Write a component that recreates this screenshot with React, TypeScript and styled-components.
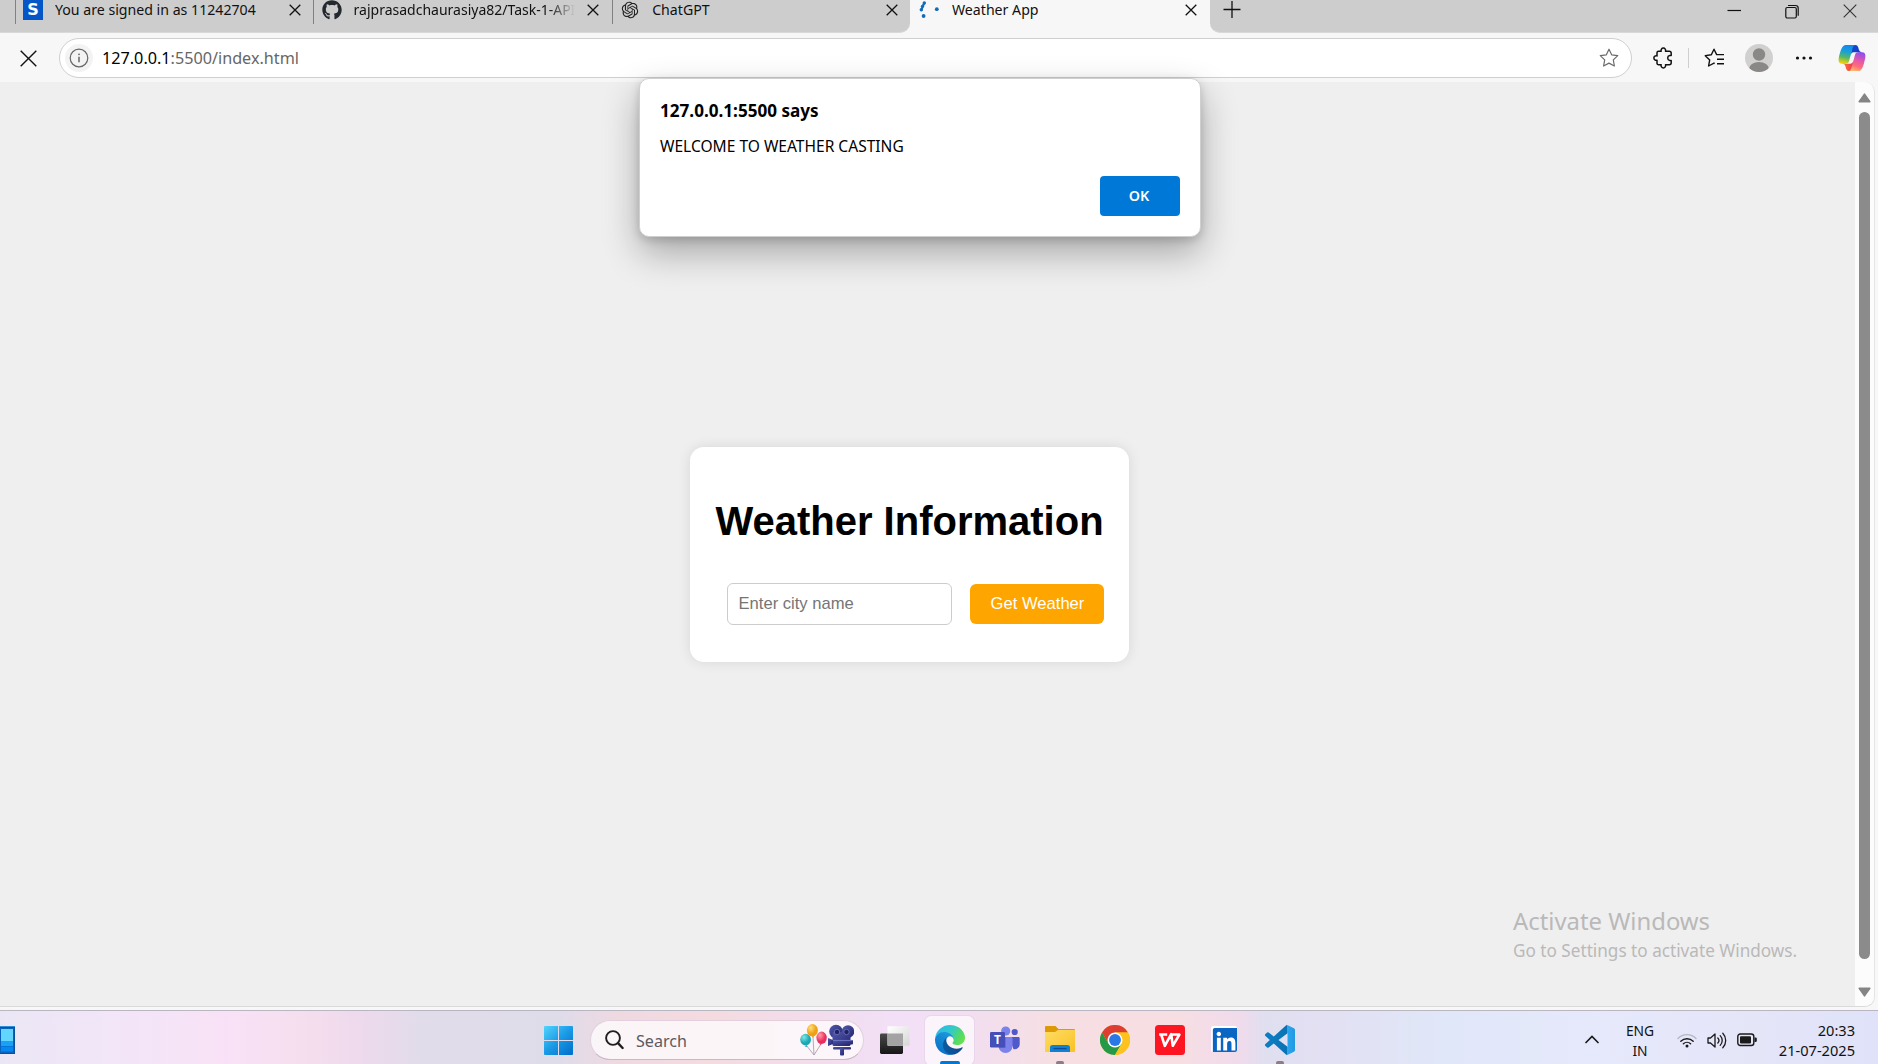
import React from 'react';
import styled, { createGlobalStyle } from 'styled-components';
import { FaGithub, FaLinkedin } from 'react-icons/fa';
import { RiOpenaiFill } from 'react-icons/ri';

const ui = `"Segoe UI", "Noto Sans", "Open Sans", sans-serif`;

const Global = createGlobalStyle`
  * { box-sizing: border-box; }
  body { margin: 0; font-family: ${ui}; color: #111; overflow: hidden; }
  svg { display: block; flex: none; }
  button { border: 0; padding: 0; font-family: inherit; }
`;

const Screen = styled.div`
  position: relative;
  display: flex;
  flex-direction: column;
  width: 1878px;
  height: 1064px;
  background: #f7f7f7;
  overflow: hidden;
`;

/* ---------- tab strip ---------- */
const TabStrip = styled.header`
  display: flex;
  height: 33px;
  flex: none;
  background: #f7f7f7;
`;
const TabGroup = styled.div<{ $side: 'left' | 'right' }>`
  display: flex;
  background: #cdcdcd;
  border-bottom: 1px solid #d9d9d9;
  ${p => p.$side === 'left'
    ? 'width: 910px; padding-left: 15px; border-bottom-right-radius: 10px;'
    : 'flex: 1; padding: 0 21px 0 13px; border-bottom-left-radius: 10px;'}
`;
const Tab = styled.div<{ $active?: boolean }>`
  display: flex;
  align-items: center;
  width: ${p => (p.$active ? 300 : 298.6)}px;
  height: 20px;
  padding: 0 13px 0 ${p => (p.$active ? 9 : 8)}px;
  flex: none;
`;
const Divider = styled.i`
  align-self: flex-start;
  width: 1px;
  height: 24px;
  margin-left: -8.5px;
  margin-right: 7.5px;
  flex: none;
  background: #808080;
`;
const Favicon = styled.span<{ $gap?: number }>`
  display: flex;
  width: 20px;
  height: 20px;
  margin-right: ${p => p.$gap ?? 12}px;
  flex: none;
`;
const SBadge = styled.span`
  width: 20px;
  height: 20px;
  background: #0557c8;
  color: #fff;
  font: 700 16px/20px "DejaVu Sans", sans-serif;
  text-align: center;
`;
const TabTitle = styled.span<{ $fade?: boolean; $size?: number }>`
  flex: 1;
  height: 22px;
  padding-top: 1px;
  font-size: ${p => p.$size ?? 14.15}px;
  line-height: 20px;
  margin-right: ${p => (p.$fade ? 12 : 20)}px;
  white-space: nowrap;
  overflow: hidden;
  color: #111;
  ${p => p.$fade && 'mask-image: linear-gradient(90deg, #000 88%, transparent 100%);'}
`;
const WindowControls = styled.div`
  display: flex;
  gap: 44px;
  margin: 4px 0 0 auto;
`;
const NewTab = styled.div`
  margin-top: 0;
`;

/* ---------- toolbar ---------- */
const Toolbar = styled.div`
  display: flex;
  align-items: center;
  height: 49px;
  flex: none;
  padding: 1px 11px 0 20px;
`;
const Address = styled.div`
  display: flex;
  align-items: center;
  width: 1573px;
  height: 40px;
  margin-left: 22px;
  padding: 0 12px 0 5px;
  border: 1px solid #cfcfcf;
  border-radius: 20px;
  background: #fff;
`;
const InfoDisc = styled.span`
  display: grid;
  place-items: center;
  width: 28px;
  height: 28px;
  border-radius: 50%;
  background: #f3f3f3;
`;
const Url = styled.span`
  flex: 1;
  margin-left: 9px;
  font-size: 16.2px;
  line-height: 24px;
  color: #666;
  b { font-weight: 400; color: #000; }
`;
const ToolIcons = styled.div`
  display: flex;
  align-items: center;
  flex: 1;
  padding-left: 21px;
`;
const ToolDivider = styled.i`
  width: 1px;
  height: 20px;
  margin: 0 15px;
  background: #cfcfcf;
`;
const Gap = styled.i<{ $w: number }>`
  width: ${p => p.$w}px;
  flex: none;
`;

/* ---------- viewport ---------- */
const Viewport = styled.main`
  display: flex;
  height: 925px;
  flex: none;
  width: 1875px;
  border-right: 1px solid #e4e4e4;
  border-bottom: 1px solid #dadada;
  border-radius: 0 10px 10px 0;
  background: #efefef;
  overflow: hidden;
`;
const Page = styled.div`
  display: flex;
  flex-direction: column;
  align-items: center;
  flex: 1;
`;
const Card = styled.section`
  width: 439px;
  height: 215px;
  margin: 365px 36px 0 0;
  padding: 0 25px;
  border-radius: 14px;
  background: #fff;
  box-shadow: 0 0 13px rgba(0, 0, 0, 0.1);
`;
const Heading = styled.h1`
  margin: 0;
  padding-top: 51px;
  font: 700 40px/46px "Liberation Sans", Arial, sans-serif;
  text-align: center;
  white-space: nowrap;
  color: #000;
`;
const Form = styled.div`
  display: flex;
  align-items: center;
  gap: 18px;
  margin: 39px 0 0 12px;
`;
const CityInput = styled.input`
  width: 225px;
  height: 42px;
  padding: 0 0 1px 10.5px;
  border: 1px solid #ccc;
  border-radius: 6px;
  background: #fff;
  outline: 0;
  font: 16.6px "Liberation Sans", Arial, sans-serif;
  &::placeholder { color: #757575; opacity: 1; }
`;
const WeatherButton = styled.button`
  width: 134px;
  height: 40px;
  padding: 0 0 1px 1px;
  flex: none;
  border-radius: 6px;
  background: #ffa500;
  color: #fff;
  font: 16.6px "Liberation Sans", Arial, sans-serif;
`;
const Scrollbar = styled.div`
  display: flex;
  flex-direction: column;
  align-items: center;
  width: 19px;
  padding: 11px 0 9px;
  background: #fcfcfc;
`;
const Thumb = styled.div`
  width: 11px;
  flex: 1;
  margin: 9px 0 28px;
  border-radius: 6px;
  background: #8b8b8b;
`;

/* ---------- overlays ---------- */
const Dialog = styled.div`
  position: absolute;
  left: 639px;
  top: 78px;
  width: 562px;
  height: 159px;
  padding: 20px;
  display: flex;
  flex-direction: column;
  border: 1px solid #cfcfcf;
  border-radius: 10px;
  background: #fff;
  box-shadow: 0 16px 36px rgba(0, 0, 0, 0.3), 0 3px 10px rgba(0, 0, 0, 0.16);
`;
const DialogTitle = styled.div`
  font-weight: 700;
  font-size: 17.1px;
  line-height: 24px;
  white-space: nowrap;
  color: #000;
`;
const DialogText = styled.div`
  margin-top: 11px;
  font-size: 15.55px;
  line-height: 24px;
  color: #000;
`;
const OkButton = styled.button`
  align-self: flex-end;
  width: 80px;
  height: 40px;
  margin-top: 18px;
  padding: 0 2px 2px 0;
  border-radius: 4px;
  background: #0078d7;
  color: #fff;
  font-size: 14.3px;
  font-weight: 600;
`;
const Watermark = styled.div`
  position: absolute;
  left: 1513px;
  top: 904px;
  color: #b9b9b9;
  white-space: nowrap;
`;
const WatermarkTitle = styled.div`
  font-size: 23.85px;
  line-height: 34px;
`;
const WatermarkText = styled.div`
  margin-top: 1px;
  font-size: 17.17px;
  line-height: 24px;
`;

/* ---------- taskbar ---------- */
const Taskbar = styled.footer`
  display: flex;
  align-items: center;
  height: 54px;
  flex: none;
  margin-top: auto;
  border-top: 1px solid #b9b6c2;
  background: linear-gradient(90deg, #ebe6f5 0, #f2e6f8 110px, #f9e1f6 235px, #f5dfee 300px,
    #eed9ed 360px, #e1dcea 420px, #dfdce9 560px, #efd9e1 620px, #f4dbe0 710px, #f2ddee 830px,
    #f3e0f8 900px, #f2deee 980px, #f6dfe3 1050px, #f6dee3 1180px, #f0dbec 1240px, #e0dff0 1265px,
    #e2e0f2 1320px, #e0e7f8 1440px, #e6e9fb 1600px, #e5e5f8 1760px, #dfe2f9 1878px);
`;
const WidgetButton = styled.div`
  margin-top: 5px;
`;
const Start = styled.div`
  margin: 6px 17px 0 529px;
`;
const SearchBox = styled.div`
  display: flex;
  align-items: center;
  width: 274px;
  height: 40px;
  padding: 0 9px 0 13.5px;
  border: 1px solid #e3d0dc;
  border-bottom-color: #c9b8c6;
  border-radius: 20px;
  background: rgba(255, 255, 255, 0.72);
  margin-top: 5px;
`;
const SearchText = styled.span`
  flex: 1;
  margin-left: 12.5px;
  padding-top: 1px;
  font-size: 16.1px;
  color: #5c5a60;
`;
const Slot = styled.div<{ $active?: boolean }>`
  position: relative;
  display: flex;
  justify-content: center;
  align-items: center;
  width: 49px;
  height: 49px;
  margin-left: 6px;
  margin-top: 5px;
  padding-bottom: 1px;
  border-radius: 6px;
  ${p => p.$active && 'background: rgba(255,255,255,.65); box-shadow: 0 0 0 1px rgba(225,205,230,.5);'}
`;
const Indicator = styled.i<{ $active?: boolean }>`
  position: absolute;
  bottom: 0;
  width: ${p => (p.$active ? 20 : 8)}px;
  height: 4px;
  border-radius: 2px;
  background: ${p => (p.$active ? '#0078d4' : '#8c7d86')};
`;
const Tray = styled.div`
  display: flex;
  align-items: center;
  margin-left: auto;
  margin-right: 23px;
  line-height: 20px;
`;
const Chevron = styled.span`
  margin-top: 4px;
`;
const Lang = styled.div`
  width: 40px;
  margin: 6px 17px 0 21px;
  text-align: center;
  font-size: 13.8px;
`;
const Status = styled.div`
  display: flex;
  align-items: center;
  gap: 10px;
  margin-top: 5px;
`;
const Clock = styled.div`
  width: 98px;
  margin-top: 4px;
  text-align: right;
  font-size: 14.6px;
`;

/* ---------- drawings ---------- */
const Cross = ({ s, w = 1.3, c = '#111' }: { s: number; w?: number; c?: string }) => (
  <svg width={s} height={s} viewBox={`0 0 ${s} ${s}`}>
    <path d={`M.7 .7L${s - 0.7} ${s - 0.7}M${s - 0.7} .7L.7 ${s - 0.7}`} stroke={c} strokeWidth={w} fill="none" />
  </svg>
);
const Spinner = () => (
  <svg width="22" height="20" viewBox="0 0 22 20" fill="#0f6cbd">
    <path d="M5.200 3.200L3.700 6.200L2.500 10" fill="none" stroke="#0f6cbd" strokeWidth="2.200" strokeLinecap="round" />
    <circle cx="5.3" cy="3" r="1.7" /><circle cx="3.5" cy="6.3" r="1.6" /><circle cx="2.3" cy="9.8" r="1.7" />
    <circle cx="4.6" cy="16" r="1.9" /><circle cx="17.8" cy="9.2" r="1.9" />
  </svg>
);
const star = 'M10 1.2l2.65 5.6 6.1.85-4.45 4.25 1.1 6.1L10 15.1 4.6 18l1.1-6.1L1.25 7.65l6.1-.85z';
const Star = () => (
  <svg width="20" height="20" viewBox="0 0 20 20">
    <path d={star} fill="none" stroke="#6b6b6b" strokeWidth="1.2" strokeLinejoin="round" />
  </svg>
);
const Puzzle = () => (
  <svg width="20" height="22" viewBox="0 0 20 22" fill="none" stroke="#111" strokeWidth="1.5" strokeLinejoin="round">
    <path d="M5.6 4.2h2.6a2.3 2.3 0 1 1 4.3 0H16.2a2 2 0 0 1 2 2v2.4h-1.5a2.5 2.5 0 0 0 0 4.9h1.5v2.3a2 2 0 0 1-2 2h-3.7a2.3 2.3 0 1 1-4.3 0H5.6a1.6 1.6 0 0 1-1.6-1.6V13.2a2.3 2.3 0 1 1 0-4.3V5.800a1.600 1.600 0 0 1 1.600-1.600z" />
  </svg>
);
const Favorites = () => (
  <svg width="21" height="20" viewBox="0 0 21 20" fill="none" stroke="#111" strokeWidth="1.4" strokeLinejoin="round">
    <path d="M10.6 15.6L10 15.1 4.6 18l1.1-6.1L1.25 7.65l6.1-.85L10 1.2l2.65 5.4H20M13 11.2h7M13 15.7h7" />
  </svg>
);
const Avatar = () => (
  <svg width="28" height="28" viewBox="0 0 28 28">
    <clipPath id="av"><circle cx="14" cy="14" r="14" /></clipPath>
    <g clipPath="url(#av)">
      <rect width="28" height="28" fill="#d2d0ce" />
      <circle cx="14" cy="10.5" r="6.2" fill="#8a8886" />
      <ellipse cx="14" cy="25" rx="10" ry="7" fill="#8a8886" />
    </g>
  </svg>
);
const Copilot = () => (
  <svg width="28" height="26" viewBox="1 4 46 40" preserveAspectRatio="none">
    <defs>
      <linearGradient id="c1" x1="0" y1="0" x2="1" y2="1"><stop stopColor="#0a4fd6" /><stop offset="1" stopColor="#2035b8" /></linearGradient>
      <linearGradient id="c2" x1="0" y1="0" x2="1" y2="0"><stop stopColor="#ff7a3a" /><stop offset="1" stopColor="#e8384f" /></linearGradient>
      <linearGradient id="c3" x1=".5" y1="0" x2=".3" y2="1"><stop stopColor="#1188ee" /><stop offset=".35" stopColor="#1aa0d8" /><stop offset=".65" stopColor="#54b868" /><stop offset="1" stopColor="#ffd400" /></linearGradient>
      <linearGradient id="c4" x1=".7" y1="0" x2=".4" y2="1"><stop stopColor="#8a4ff0" /><stop offset=".45" stopColor="#e658a8" /><stop offset=".75" stopColor="#ff6d7a" /><stop offset="1" stopColor="#ffb56b" /></linearGradient>
    </defs>
    <path fill="url(#c1)" d="M34.142 7.325A4.63 4.63 0 0 0 29.7 4H28.35a4.63 4.63 0 0 0-4.554 3.794L21.48 20.407l.575-1.965a4.63 4.63 0 0 1 4.444-3.33h7.853l3.294 1.282 3.175-1.283h-.926a4.63 4.63 0 0 1-4.443-3.325z" />
    <path fill="url(#c2)" d="M14.33 40.656A4.63 4.63 0 0 0 18.779 44h2.87a4.63 4.63 0 0 0 4.629-4.51l.312-12.163-.654 2.233a4.63 4.63 0 0 1-4.443 3.329h-7.919l-2.823-1.532-3.057 1.532h.912a4.63 4.63 0 0 1 4.447 3.344z" />
    <path fill="url(#c3)" d="M29.5 4H13.46c-4.583 0-7.332 6.057-9.165 12.113C2.123 23.29-.72 32.885 7.503 32.885h6.925a4.67 4.67 0 0 0 4.482-3.357 2078.617 2078.617 0 0 1 4.971-17.156c.843-2.843 1.544-5.284 2.621-6.805C27.107 4.714 28.115 4 29.5 4z" />
    <path fill="url(#c4)" d="M18.498 44h16.04c4.582 0 7.332-6.058 9.165-12.115 2.171-7.177 5.013-16.775-3.208-16.775h-6.926a4.67 4.67 0 0 0-4.482 3.358 2084.99 2084.99 0 0 1-4.972 17.16c-.842 2.844-1.544 5.285-2.62 6.806-.604.852-1.612 1.566-2.997 1.566z" />
  </svg>
);
const Arrow = ({ down }: { down?: boolean }) => (
  <svg width="13" height="10" viewBox="0 0 13 10" fill="#858585" stroke="#858585" strokeWidth="1.6" strokeLinejoin="round">
    <path d={down ? 'M1.2 1.3h10.6L6.5 8.8z' : 'M1.2 8.7h10.6L6.5 1.2z'} />
  </svg>
);
const Widget = () => (
  <svg width="15" height="28" viewBox="0 0 15 28">
    <rect width="15" height="28" fill="#0d4f9e" /><rect width="15" height="1" fill="#2f8fd6" />
    <rect width="14" height="25" y="2" fill="#0a62bd" />
    <rect x="1" y="3" width="12" height="12" fill="#62d6fd" />
    <rect x="1" y="15" width="12" height="5" fill="#1ba0f8" />
    <rect x="1" y="20.5" width="12" height="5" fill="#0488f0" />
  </svg>
);
const WindowsLogo = () => (
  <svg width="29" height="29" viewBox="0 0 29 29">
    <defs><linearGradient id="win" gradientUnits="userSpaceOnUse" x1="0" y1="0" x2="27" y2="29"><stop stopColor="#52d4fd" /><stop offset=".5" stopColor="#1c9be6" /><stop offset="1" stopColor="#0070cc" /></linearGradient></defs>
    <path fill="url(#win)" d="M1 0h13v14H0V1a1 1 0 0 1 1-1zM15 0h13a1 1 0 0 1 1 1v13H15zM0 15h14v14H1a1 1 0 0 1-1-1zM15 15h14v13a1 1 0 0 1-1 1H15z" />
  </svg>
);
const Magnifier = () => (
  <svg width="19" height="20" viewBox="0 0 19 20" fill="none" stroke="#1f1d20">
    <circle cx="8" cy="8" r="6.9" strokeWidth="1.9" /><path d="M13 13.2l4.6 4.8" strokeWidth="2.4" strokeLinecap="round" />
  </svg>
);
const Party = () => (
  <svg width="54" height="32" viewBox="0 0 54 32">
    <defs>
      <radialGradient id="b1" cx=".35" cy=".3"><stop stopColor="#ffe07a" /><stop offset="1" stopColor="#ee9f12" /></radialGradient>
      <radialGradient id="b2" cx=".35" cy=".3"><stop stopColor="#7fe6e2" /><stop offset="1" stopColor="#1aa9b4" /></radialGradient>
      <radialGradient id="b3" cx=".35" cy=".3"><stop stopColor="#ff9cab" /><stop offset="1" stopColor="#ea2f5e" /></radialGradient>
      <linearGradient id="cam" x1="0" y1="0" x2="1" y2="1"><stop stopColor="#5259ae" /><stop offset="1" stopColor="#22246c" /></linearGradient>
    </defs>
    <path d="M6 21l8 10M13 13l1 18M21 20l-7 11" stroke="#a9a0ad" strokeWidth=".9" fill="none" />
    <ellipse cx="5.6" cy="15.6" rx="5.4" ry="5.8" fill="url(#b2)" /><path d="M4.6 22.6l2.2-1.4.6 1.8z" fill="#1aa9b4" />
    <ellipse cx="21.6" cy="13.8" rx="5.2" ry="6.2" fill="url(#b3)" /><path d="M19.2 19.2l1.6 2 .8-1.7z" fill="#ea2f5e" />
    <ellipse cx="12.4" cy="6.3" rx="5.5" ry="6.2" fill="url(#b1)" /><path d="M11.8 12l1.2 2 1.1-1.8z" fill="#ee9f12" />
    <g fill="url(#cam)">
      <circle cx="36" cy="7.5" r="6.8" /><circle cx="48" cy="7.5" r="6.3" />
      <rect x="32.5" y="8" width="18" height="14" rx="1.5" />
      <path d="M28 14l5 2v4l-5 2z" /><rect x="33" y="16" width="20" height="4.5" rx="1" />
      <rect x="33" y="23" width="18" height="2.5" rx="1" /><rect x="40" y="24" width="4" height="7.5" rx="1" />
    </g>
    <circle cx="37" cy="8" r="2.7" fill="#20225f" stroke="#7076c4" strokeWidth=".8" />
    <circle cx="46.5" cy="8" r="2.7" fill="#20225f" stroke="#7076c4" strokeWidth=".8" />
    <path d="M33 16.4h19" stroke="#7c82cf" strokeWidth=".8" />
  </svg>
);
const TaskView = () => (
  <svg width="30" height="28" viewBox="0 0 30 28">
    <defs>
      <linearGradient id="tv1" x1="0" y1="0" x2="0" y2="1"><stop stopColor="#4a4a4a" /><stop offset="1" stopColor="#161616" /></linearGradient>
      <linearGradient id="tv2" x1="0" y1="0" x2="1" y2="1"><stop stopColor="#fff" /><stop offset="1" stopColor="#d6d6d6" /></linearGradient>
    </defs>
    <rect x="0" y="7.5" width="23" height="20.5" rx="1.4" fill="url(#tv1)" />
    <rect x="7.5" y=".3" width="22" height="19.5" rx="1" fill="url(#tv2)" />
    <rect x="7.5" y="7.5" width="15.5" height="12.3" fill="#a3a3a3" />
  </svg>
);
const EdgeLogo = () => (
  <svg width="30" height="30" viewBox="4.6 4.8 256 256">
    <defs>
      <linearGradient id="e1" x1="0" y1=".6" x2="1" y2=".6"><stop stopColor="#0c59a4" /><stop offset="1" stopColor="#114a8b" /></linearGradient>
      <linearGradient id="e2" x1=".7" y1="0" x2=".3" y2="1"><stop stopColor="#1b9de2" /><stop offset=".4" stopColor="#1488d2" /><stop offset="1" stopColor="#0a6fc8" /></linearGradient>
      <linearGradient id="e3" x1="0" y1=".2" x2="1" y2=".65"><stop stopColor="#2fb5e8" /><stop offset=".45" stopColor="#33c8cd" /><stop offset=".8" stopColor="#52d96a" /><stop offset="1" stopColor="#66e04c" /></linearGradient>
    </defs>
    <path fill="url(#e1)" d="M235.68 195.46a93.73 93.73 0 0 1-10.54 4.71 101.87 101.87 0 0 1-35.9 6.46c-47.32 0-88.54-32.55-88.54-74.32A31.48 31.48 0 0 1 117.13 105c-42.8 1.8-53.8 46.4-53.8 72.53 0 73.88 68.09 81.37 82.76 81.37 7.91 0 19.84-2.3 27-4.56l1.31-.44a128.34 128.34 0 0 0 66.6-52.8 4 4 0 0 0-5.32-5.64z" />
    <path fill="url(#e2)" d="M110.34 246.34A79.2 79.2 0 0 1 87.6 225a80.72 80.72 0 0 1 29.53-120c3.12-1.47 8.45-4.13 15.54-4a32.35 32.35 0 0 1 25.69 13 31.88 31.88 0 0 1 6.36 18.66c0-.21 24.46-79.6-80-79.6-43.9 0-80 41.66-80 78.21a130.15 130.15 0 0 0 12.11 56 128 128 0 0 0 156.38 67.11 75.55 75.55 0 0 1-62.78-8z" />
    <path fill="url(#e3)" d="M156.94 153.78c-.81 1.05-3.3 2.5-3.3 5.66 0 2.61 1.7 5.12 4.72 7.23 14.38 10 41.49 8.68 41.56 8.68a59.56 59.56 0 0 0 30.27-8.35 61.38 61.38 0 0 0 30.43-52.88c.26-22.41-8-37.31-11.34-43.91C228.09 28.76 182.35 4.81 132.61 4.81a128 128 0 0 0-128 126.2c.48-36.54 36.8-66.05 80-66.05 3.5 0 23.46.34 42 10.07 16.34 8.58 24.9 18.94 30.85 29.21 6.18 10.67 7.28 24.15 7.28 29.52s-2.74 13.33-7.77 20.02z" />
  </svg>
);
const TeamsLogo = () => (
  <svg width="30" height="28" viewBox="0 0 30 28">
    <circle cx="24.7" cy="6" r="3.1" fill="#5059c9" />
    <path d="M19 11h9.4c.8 0 1.3.6 1.3 1.3v5.9a5 5 0 0 1-5 5h-1.2z" fill="#5059c9" />
    <circle cx="15.7" cy="5" r="4.6" fill="#7b83eb" />
    <path d="M9 11h12.3c.7 0 1.2.6 1.2 1.3v7.6a7 7 0 0 1-14 .2z" fill="#7b83eb" />
    <path d="M10 11h6v11h-7z" fill="#5a62c3" opacity=".55" />
    <rect x="0" y="6" width="15" height="15.5" rx="1.3" fill="#464eb8" />
    <text x="7.5" y="18" fill="#fff" fontFamily="Open Sans" fontWeight="700" fontSize="12" textAnchor="middle">T</text>
  </svg>
);
const Explorer = () => (
  <svg width="30" height="27" viewBox="0 0 30 27">
    <defs><linearGradient id="fo" x1="0" y1="0" x2="1" y2="1"><stop stopColor="#ffdc62" /><stop offset="1" stopColor="#f9c127" /></linearGradient></defs>
    <path d="M0 1.2C0 .5.5 0 1.2 0h9.3l3 3H29c.6 0 1 .5 1 1v6H0z" fill="#dd9a05" />
    <path d="M0 6h10l3-2h17v21a1 1 0 0 1-1 1H1a1 1 0 0 1-1-1z" fill="url(#fo)" />
    <path d="M5 26v-4.500a2.500 2.500 0 0 1 2.500-2.500h15a2.500 2.500 0 0 1 2.500 2.500V26z" fill="#1080d2" />
    <path d="M8.500 22.600h13" stroke="#0a4d96" strokeWidth="1.300" />
  </svg>
);
const ChromeLogo = () => (
  <svg width="30" height="30" viewBox="0 0 48 48">
    <circle cx="24" cy="24" r="24" fill="#fcc31e" />
    <path d="M24 12h20.8A24 24 0 0 0 3.200 12L13.600 30z" fill="#de3d31" />
    <path d="M13.600 30L3.200 12A24 24 0 0 0 24 48l10.400-18z" fill="#249a49" />
    <path d="M24 12h20.800A24 24 0 0 1 24 48l10.400-18z" fill="#fcc31e" />
    <circle cx="24" cy="24" r="12" fill="#fff" /><circle cx="24" cy="24" r="9.500" fill="#2a78e8" />
  </svg>
);
const WpsLogo = () => (
  <svg width="30" height="30" viewBox="0 0 30 30">
    <rect width="30" height="30" rx="3.500" fill="#fd1522" />
    <path d="M4.200 9.500h8M6.200 9.500l3.600 11.300 6.400-11.600 1.600 11.600L24.400 9.500H16" fill="none" stroke="#fff" strokeWidth="2.600" strokeLinejoin="round" />
  </svg>
);
const CodeLogo = () => (
  <svg width="30" height="30" viewBox="0 0 24 24">
    <defs><linearGradient id="vs" gradientUnits="userSpaceOnUse" x1="0" y1="0" x2="24" y2="0"><stop stopColor="#0d7fc4" /><stop offset=".74" stopColor="#0a72b4" /><stop offset=".75" stopColor="#29a7ef" /><stop offset="1" stopColor="#2299e0" /></linearGradient></defs>
    <path fill="url(#vs)" d="M23.150 2.587L18.210.210a1.494 1.494 0 0 0-1.705.290l-9.460 8.630-4.120-3.128a.999.999 0 0 0-1.276.057L.327 7.261A1 1 0 0 0 .326 8.740L3.899 12 .326 15.260a1 1 0 0 0 .001 1.479L1.650 17.940a.999.999 0 0 0 1.276.057l4.120-3.128 9.460 8.630a1.492 1.492 0 0 0 1.704.290l4.942-2.377A1.500 1.500 0 0 0 24 20.060V3.939a1.500 1.500 0 0 0-.850-1.352zm-5.146 14.861L10.826 12l7.178-5.448v10.896z" />
  </svg>
);
const Linked = styled.span`
  display: grid;
  place-items: center;
  width: 26px;
  height: 26px;
  margin: 0 1px 1px 0;
  overflow: hidden;
  background: #fff;
  border-radius: 2px;
`;
const Wifi = () => (
  <svg width="20" height="15" viewBox="0 0 20 15" fill="none" stroke="#1a1a1a" strokeWidth="1.400" strokeLinecap="round">
    <path d="M1 5.500a12.500 12.500 0 0 1 18 0" stroke="#b5b5c6" />
    <path d="M3.800 8.300a8.800 8.800 0 0 1 12.400 0M6.400 10.800a5.200 5.200 0 0 1 7.200 0" />
    <circle cx="10" cy="13" r="1.500" fill="#1a1a1a" stroke="none" />
  </svg>
);
const Speaker = () => (
  <svg width="20" height="17" viewBox="0 0 20 17" fill="none" stroke="#1a1a1a" strokeWidth="1.300" strokeLinecap="round" strokeLinejoin="round">
    <path d="M1 6v5h2.500L8 15V2L3.500 6zM10.800 6a3.600 3.600 0 0 1 0 5M13.200 3.600a7 7 0 0 1 0 9.800M15.800 1.300a10.400 10.400 0 0 1 0 14.400" />
  </svg>
);
const Battery = () => (
  <svg width="20" height="14" viewBox="0 0 20 14">
    <rect x=".800" y="1" width="16" height="11.500" rx="2.500" fill="none" stroke="#1a1a1a" strokeWidth="1.400" />
    <rect x="3" y="3.200" width="11" height="7.200" rx="1" fill="#1a1a1a" /><path d="M17.500 4.500h1a1.300 1.300 0 0 1 1.300 1.300v2a1.300 1.300 0 0 1-1.300 1.300h-1z" fill="#1a1a1a" />
  </svg>
);

const apps = [
  { icon: <TaskView /> },
  { icon: <EdgeLogo />, active: true, running: true },
  { icon: <TeamsLogo /> },
  { icon: <Explorer />, running: true },
  { icon: <ChromeLogo /> },
  { icon: <WpsLogo /> },
  { icon: <Linked><FaLinkedin size={30} color="#0a66c2" /></Linked> },
  { icon: <CodeLogo />, running: true },
];

export default function App() {
  return (
    <Screen>
      <Global />
      <TabStrip>
        <TabGroup $side="left">
          <Tab><Divider /><Favicon><SBadge>S</SBadge></Favicon><TabTitle>You are signed in as 11242704</TabTitle><Cross s={12} /></Tab>
          <Tab><Divider /><Favicon><FaGithub size={20} color="#24292f" /></Favicon><TabTitle $fade $size={14}>rajprasadchaurasiya82/Task-1-API</TabTitle><Cross s={12} /></Tab>
          <Tab><Divider /><Favicon><RiOpenaiFill size={20} color="#222" /></Favicon><TabTitle>ChatGPT</TabTitle><Cross s={12} /></Tab>
        </TabGroup>
        <Tab $active><Favicon $gap={13}><Spinner /></Favicon><TabTitle>Weather App</TabTitle><Cross s={12} /></Tab>
        <TabGroup $side="right">
          <NewTab>
            <svg width="18" height="20" viewBox="0 0 18 20"><path d="M9 1v17M0.500 9.500h17" stroke="#111" strokeWidth="1.300" /></svg>
          </NewTab>
          <WindowControls>
            <svg width="14" height="14" viewBox="0 0 14 14"><path d="M0.500 6.500h13.500" stroke="#111" strokeWidth="1.200" /></svg>
            <svg width="14" height="15" viewBox="0 0 14 15" fill="none" stroke="#111" strokeWidth="1.200"><rect x=".800" y="3.500" width="10.500" height="10.500" rx="1.500" /><path d="M3 1.500h7.500a2.700 2.700 0 0 1 2.700 2.700v7.500" /></svg>
            <Cross s={14} w={1.1} c="#333" />
          </WindowControls>
        </TabGroup>
      </TabStrip>
      <Toolbar>
        <Cross s={17} w={1.4} />
        <Address>
          <InfoDisc>
            <svg width="20" height="20" viewBox="0 0 20 20" fill="none" stroke="#666" strokeWidth="1.200"><circle cx="10" cy="10" r="8.800" /><path d="M10 8.800v5.400" strokeWidth="1.500" /><circle cx="10" cy="6.300" r=".900" fill="#666" stroke="none" /></svg>
          </InfoDisc>
          <Url><b>127.0.0.1</b>:5500/index.html</Url>
          <Star />
        </Address>
        <ToolIcons>
          <Puzzle /><ToolDivider /><Favorites /><Gap $w={20} /><Avatar /><Gap $w={22} />
          <svg width="18" height="6" viewBox="0 0 18 6" fill="#111"><circle cx="2.500" cy="3" r="1.600" /><circle cx="9" cy="3" r="1.600" /><circle cx="15.500" cy="3" r="1.600" /></svg>
          <Gap $w={25} /><Copilot />
        </ToolIcons>
      </Toolbar>
      <Viewport>
        <Page>
          <Card>
            <Heading>Weather Information</Heading>
            <Form>
              <CityInput placeholder="Enter city name" />
              <WeatherButton>Get Weather</WeatherButton>
            </Form>
          </Card>
        </Page>
        <Scrollbar><Arrow /><Thumb /><Arrow down /></Scrollbar>
      </Viewport>
      <Taskbar>
        <WidgetButton><Widget /></WidgetButton>
        <Start><WindowsLogo /></Start>
        <SearchBox><Magnifier /><SearchText>Search</SearchText><Party /></SearchBox>
        {apps.map((a, i) => (
          <Slot key={i} $active={a.active}>
            {a.icon}
            {a.running && <Indicator $active={a.active} />}
          </Slot>
        ))}
        <Tray>
          <Chevron>
            <svg width="14" height="9" viewBox="0 0 14 9"><path d="M1 7.500l6-6 6 6" stroke="#1a1a1a" strokeWidth="1.700" strokeLinecap="round" fill="none" /></svg>
          </Chevron>
          <Lang>ENG<br />IN</Lang>
          <Status><Wifi /><Speaker /><Battery /></Status>
          <Clock>20:33<br />21-07-2025</Clock>
        </Tray>
      </Taskbar>
      <Dialog>
        <DialogTitle>127.0.0.1:5500 says</DialogTitle>
        <DialogText>WELCOME TO WEATHER CASTING</DialogText>
        <OkButton>OK</OkButton>
      </Dialog>
      <Watermark>
        <WatermarkTitle>Activate Windows</WatermarkTitle>
        <WatermarkText>Go to Settings to activate Windows.</WatermarkText>
      </Watermark>
    </Screen>
  );
}
